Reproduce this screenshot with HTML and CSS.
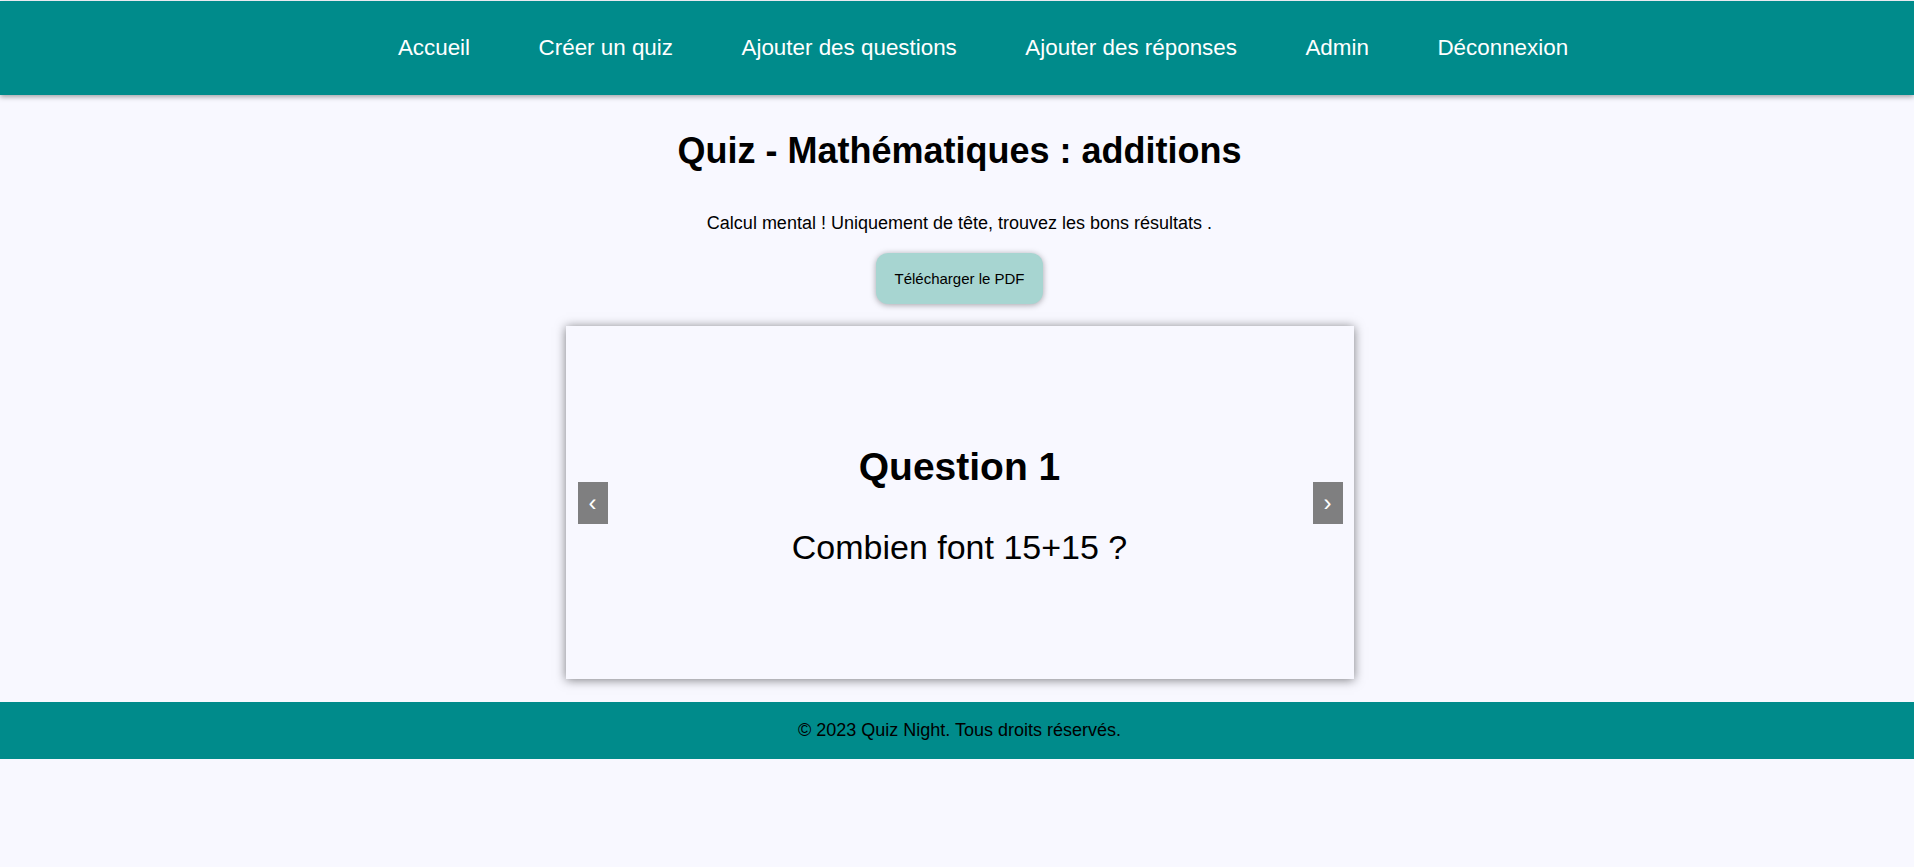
FILE: index.html
```html
<!DOCTYPE html>
<html lang="fr">
<head>
<meta charset="utf-8">
<title>Quiz - Mathématiques : additions</title>
<link rel="stylesheet" href="styles.css">
</head>
<body>
<header class="site-header">
  <nav>
    <ul class="nav-list">
      <li><a href="#">Accueil</a></li>
      <li><a href="#">Créer un quiz</a></li>
      <li><a href="#">Ajouter des questions</a></li>
      <li><a href="#">Ajouter des réponses</a></li>
      <li><a href="#">Admin</a></li>
      <li><a href="#">Déconnexion</a></li>
    </ul>
  </nav>
</header>
<main class="content">
  <h1 class="quiz-title">Quiz - Mathématiques : additions</h1>
  <p class="quiz-desc">Calcul mental ! Uniquement de tête, trouvez les bons résultats .</p>
  <button class="pdf-btn" type="button">Télécharger le PDF</button>
  <section class="slider">
    <button class="arrow arrow-prev" type="button">&#8249;</button>
    <div class="slide">
      <h2 class="q-title">Question 1</h2>
      <p class="q-text">Combien font 15+15 ?</p>
    </div>
    <button class="arrow arrow-next" type="button">&#8250;</button>
  </section>
</main>
<footer class="site-footer">
  <p>© 2023 Quiz Night. Tous droits réservés.</p>
</footer>
</body>
</html>
```
FILE: styles.css
```css
html {
  background: #f8f8ff;
}
body {
  margin: 0;
  padding-top: 1px;
  font-family: "Liberation Sans", Arial, sans-serif;
  color: #000;
  background: #f8f8ff;
}
.site-header {
  background: #008b8b;
  height: 94px;
  display: flex;
  align-items: center;
  box-shadow: 0 2px 5px rgba(0, 0, 0, 0.35);
  position: relative;
  z-index: 1;
}
.site-header nav {
  width: 100%;
}
.nav-list {
  list-style: none;
  margin: 0;
  padding: 0 0 0 52px;
  display: flex;
  justify-content: center;
  gap: 68.5px;
}
.nav-list a {
  color: #fff;
  text-decoration: none;
  font-size: 22.4px;
  line-height: 26px;
}
.content {
  display: flex;
  flex-direction: column;
  align-items: center;
  padding-left: 5px;
}
.quiz-title {
  margin: 35px 0 0;
  font-size: 36px;
  line-height: 41px;
  font-weight: bold;
}
.quiz-desc {
  margin: 42px 0 0;
  font-size: 18px;
  line-height: 21px;
}
.pdf-btn {
  margin-top: 19px;
  height: 51px;
  padding: 0 18px;
  border: none;
  border-radius: 12px;
  background: #a7d5d1;
  color: #000;
  font-family: "Liberation Sans", Arial, sans-serif;
  font-size: 15px;
  line-height: 17px;
  box-shadow: 0 1px 6px rgba(0, 0, 0, 0.35);
}
.slider {
  position: relative;
  margin-top: 22px;
  width: 788px;
  height: 353px;
  background: #f8f8ff;
  box-shadow: 0 1px 10px rgba(0, 0, 0, 0.5);
}
.slide {
  height: 100%;
  box-sizing: border-box;
  padding-top: 4px;
  display: flex;
  flex-direction: column;
  align-items: center;
  justify-content: center;
  gap: 39px;
}
.q-title {
  margin: 0;
  font-size: 39px;
  line-height: 45px;
  font-weight: bold;
}
.q-text {
  margin: 0;
  font-size: 34px;
  line-height: 38px;
}
.arrow {
  position: absolute;
  top: 50%;
  transform: translateY(-50%);
  width: 30px;
  height: 42px;
  padding: 0;
  border: none;
  background: #7f7f80;
  color: #fff;
  font-family: "Liberation Sans", Arial, sans-serif;
  font-size: 24px;
  line-height: 42px;
  text-align: center;
}
.arrow-prev {
  left: 12px;
}
.arrow-next {
  right: 11px;
}
.site-footer {
  margin-top: 23px;
  height: 57px;
  background: #008b8b;
  display: flex;
  align-items: center;
  justify-content: center;
  padding-left: 5px;
}
.site-footer p {
  margin: 0;
  font-size: 18px;
  line-height: 21px;
  color: #000;
}
```
